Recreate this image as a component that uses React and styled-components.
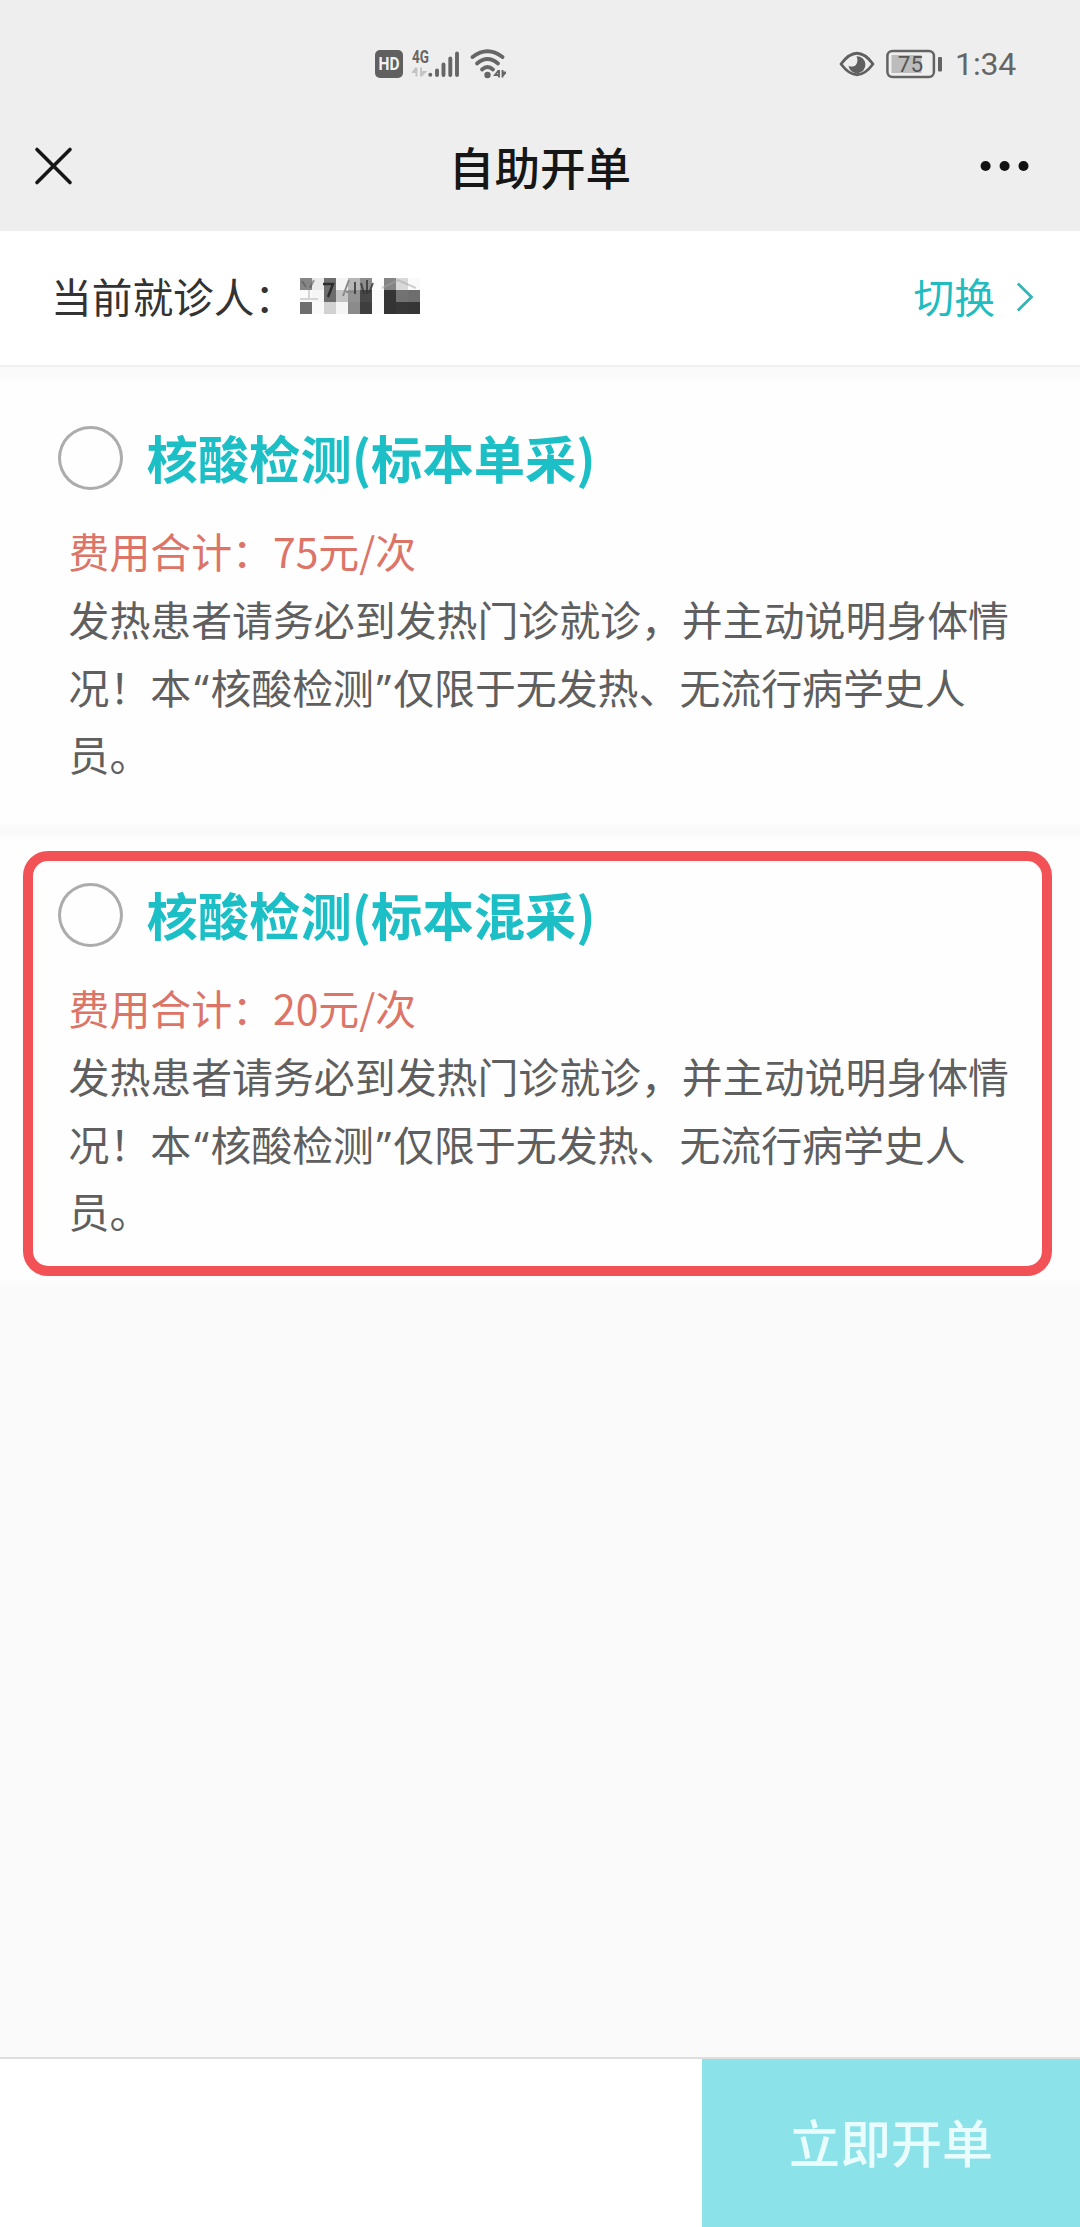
import React from "react";
import styled, { createGlobalStyle } from "styled-components";

const GlobalStyle = createGlobalStyle`
  * { box-sizing: border-box; }
  body {
    margin: 0;
    background: #fafafa;
    font-family: "Noto Sans CJK SC", "Noto Sans", sans-serif;
  }
`;

const Page = styled.div`
  display: flex;
  flex-direction: column;
  width: 1080px;
  height: 2227px;
  background: #fafafa;
  overflow: hidden;
`;

const Header = styled.header`
  height: 231px;
  flex: none;
  background: #eeeeee;
`;

const StatusBar = styled.div`
  display: flex;
  align-items: center;
  justify-content: space-between;
  height: 128px;
  padding: 0 64px 0 374px;
`;

const StatusGroup = styled.div`
  display: flex;
  align-items: center;
  gap: ${(p) => p.$gap}px;
`;

const Clock = styled.span`
  font-family: Roboto, sans-serif;
  font-size: 32px;
  line-height: 40px;
  letter-spacing: -0.2px;
  color: #656565;
`;

const TitleBar = styled.div`
  display: flex;
  align-items: center;
  justify-content: space-between;
  height: 76px;
  padding: 0 50px 0 34px;
`;

const PageTitle = styled.h1`
  margin: 0;
  font-size: 45.6px;
  font-weight: 500;
  line-height: 76px;
  color: #161616;
`;

const IconButton = styled.button`
  display: flex;
  align-items: center;
  justify-content: ${(p) => p.$justify};
  width: ${(p) => p.$width}px;
  height: 60px;
  padding: 0;
  border: 0;
  background: none;
`;

const PatientRow = styled.section`
  display: flex;
  flex: none;
  align-items: center;
  justify-content: space-between;
  height: 136px;
  padding: 0 46px 0 51px;
  border-bottom: 2px solid #efefef;
  background: #fff;
`;

const Patient = styled.div`
  display: flex;
  align-items: center;
  font-size: 40.7px;
  line-height: 60px;
  color: #333;
`;

const RowLabel = styled.span`
  padding-bottom: 4px;
`;

const SwitchLink = styled.a`
  display: flex;
  align-items: center;
  gap: 21px;
  font-size: 40.7px;
  line-height: 60px;
  color: #20bcbf;
`;

const CardList = styled.main`
  display: flex;
  flex: none;
  flex-direction: column;
  gap: 16px;
  padding-top: 15px;
`;

const Card = styled.article`
  position: relative;
  height: 441px;
  padding: 42px 60px 0 58px;
  background: #fefefe;
  box-shadow: 0 0 5px 2px #fefefe;
`;

const Highlight = styled.div`
  position: absolute;
  top: 12px;
  right: 28px;
  bottom: 4px;
  left: 23px;
  border: 10px solid #f25156;
  border-radius: 25px;
`;

const CardHead = styled.div`
  display: flex;
  align-items: center;
  gap: 24px;
  height: 68px;
  margin-bottom: 25px;
`;

const Radio = styled.span`
  width: 64.5px;
  height: 64px;
  border: 3px solid #acacac;
  border-radius: 50%;
`;

const CardTitle = styled.h2`
  margin: 0;
  padding-bottom: 3px;
  font-size: 51.3px;
  font-weight: 700;
  line-height: 68px;
  color: #1dbfc6;
`;

const CardText = styled.p`
  width: 950px;
  margin: 0 0 0 10.5px;
  font-size: 40.9px;
  line-height: 67.8px;
  color: ${(p) => (p.$price ? "#dc7468" : "#5f5f5f")};
`;

const Quote = styled.span`
  padding: ${(p) => (p.$close ? "0 2px 0 2.5px" : "0 1.5px 0 3px")};
  font-family: "Noto Sans", sans-serif;
  line-height: 1;
`;

const Footer = styled.footer`
  display: flex;
  flex: none;
  justify-content: flex-end;
  height: 170px;
  margin-top: auto;
  border-top: 2px solid #dedede;
  background: #fff;
`;

const SubmitButton = styled.button`
  width: 378px;
  padding: 0 0 5px;
  border: 0;
  background: #8be2e9;
  color: #e9fdfe;
  font-family: inherit;
  font-size: 51px;
  font-weight: 500;
  line-height: 162px;
`;

const MosaicSvg = styled.svg`
  margin-left: 5px;
  margin-bottom: 5px;
`;

const MOSAIC = [
  ["#868686", "#eaeaea", "#6e6e6e", "#f4f4f4", "#b6b6b6", "#8d8d8d", "#fdfdfd", "#858585", "#d9d9d9", "#fafafa"],
  ["#fafafa", "#f6f6f6", "#6c6c6c", "#c4c4c4", "#929292", "#484848", "#fafafa", "#343434", "#727272", "#6e6e6e"],
  ["#6e6e6e", "#fafafa", "#d2d2d2", "#f5f5f5", "#8b8b8b", "#3e3e3e", "#fbfbfb", "#343434", "#383838", "#363636"],
];

const MaskedName = () => (
  <MosaicSvg width="120" height="36" viewBox="0 0 120 36">
    {MOSAIC.map((row, y) =>
      row.map((fill, x) => (
        <rect key={`${x}-${y}`} x={x * 12} y={y * 12} width="12" height="12" fill={fill} shapeRendering="crispEdges" />
      ))
    )}
    <g fill="none">
      <path d="M2 3l4 6M14 2l-4 8" stroke="#555" strokeWidth="1.8" opacity=".6" />
      <path d="M9 12v9M0 21h18" stroke="#d4d4d4" strokeWidth="2" />
      <path d="M23 6h10l-5 13" stroke="#2c2c2c" strokeWidth="2.5" />
      <path d="M49 2l-6 16M46 14h8" stroke="#8a8a8a" strokeWidth="2" />
      <path d="M55 4v12M61 5l3 11M67 2v14M73 5l-4 10" stroke="#333" strokeWidth="2" opacity=".8" />
      <path d="M82 10L98 2l18 8" stroke="#a5a5a5" strokeWidth="2" opacity=".5" />
    </g>
  </MosaicSvg>
);

const HdIcon = () => (
  <svg width="30" height="30" viewBox="0 0 30 30">
    <rect x="1" y="1" width="28" height="28" rx="5" fill="#606060" />
    <text x="15" y="21" textAnchor="middle" textLength="21" lengthAdjust="spacingAndGlyphs" fontFamily="Roboto, sans-serif" fontWeight="700" fontSize="17.5" fill="#f2f2f2">HD</text>
  </svg>
);

const SignalIcon = () => (
  <svg width="50" height="32" viewBox="0 0 50 32">
    <text x="0" y="14.5" textLength="17" lengthAdjust="spacingAndGlyphs" fontFamily="Roboto, sans-serif" fontWeight="700" fontSize="17.5" fill="#666">4G</text>
    <path d="M4.5 20v8.5M4.5 19.5l-3.5 4.5h3.5M9 19.5v9M9 28l4-4H9" fill="none" stroke="#c4c4c4" strokeWidth="2" />
    <g stroke="#666" strokeWidth="3.9" strokeLinecap="round">
      <path d="M18.3 26.6v.2M25 22.5v4.5M31.5 16.5v10.5M38.300 10.5v16.5M45 5.5v21.5" />
    </g>
  </svg>
);

const WifiIcon = () => (
  <svg width="36" height="32" viewBox="0 0 36 32">
    <g fill="none" stroke="#666" strokeWidth="3.8" strokeLinecap="round">
      <path d="M2.5 9Q17.5-2.5 32.5 9" />
      <path d="M7 15.5Q17.5 6.500 28 15.5" />
      <path d="M12 21.5Q17.5 16.5 23 21.5" />
    </g>
    <circle cx="17.5" cy="27" r="3.2" fill="#666" />
    <path d="M28.5 22.5l-3.5 4.5h4M29 22v7.500M32.5 22v7.5M32.5 28l3-3.5h-3" fill="none" stroke="#666" strokeWidth="1.9" />
  </svg>
);

const EyeIcon = () => (
  <svg width="36" height="26" viewBox="0 0 36 26">
    <path d="M2 13Q18-8.5 34 13Q18 34.5 2 13Z" fill="none" stroke="#606060" strokeWidth="2.8" strokeLinejoin="round" />
    <path d="M17.5 5.2a8.5 8.5 0 1 1-8 9.5c2.5 1.3 5.5 1.2 7.3-.8 2-2.200 2.200-5.500.7-8.700z" fill="#606060" />
  </svg>
);

const BatteryIcon = () => (
  <svg width="58" height="32" viewBox="0 0 58 32">
    <rect x="1.4" y="3" width="46.5" height="26" rx="5" fill="none" stroke="#646464" strokeWidth="2.5" />
    <rect x="5.5" y="7" width="30" height="18" fill="#bcbcbc" />
    <text x="24.5" y="24" textAnchor="middle" fontFamily="Roboto, sans-serif" fontSize="22.5" fill="#555">75</text>
    <rect x="52" y="9" width="4" height="14.5" rx="1" fill="#646464" />
  </svg>
);

const CloseIcon = () => (
  <svg width="40" height="40" viewBox="0 0 40 40">
    <path d="M3 3.5l33 33M36 3.5l-33 33" stroke="#161616" strokeWidth="3.6" strokeLinecap="round" />
  </svg>
);

const MoreIcon = () => (
  <svg width="50" height="12" viewBox="0 0 50 12" fill="#111">
    <circle cx="5.6" cy="6" r="5" />
    <circle cx="24.6" cy="6" r="5" />
    <circle cx="43.5" cy="6" r="5" />
  </svg>
);

const ChevronSvg = styled.svg`
  margin-bottom: 2px;
`;

const ChevronIcon = () => (
  <ChevronSvg width="18" height="32" viewBox="0 0 18 32">
    <path d="M1.8 2.5L15.5 16 1.8 29.5" fill="none" stroke="#35b5b6" strokeWidth="2.8" />
  </ChevronSvg>
);

const tests = [
  { title: "核酸检测(标本单采)", price: "75", highlighted: false },
  { title: "核酸检测(标本混采)", price: "20", highlighted: true },
];

function TestCard({ title, price, highlighted }) {
  return (
    <Card>
      <CardHead>
        <Radio />
        <CardTitle>{title}</CardTitle>
      </CardHead>
      <CardText $price>{`费用合计：${price}元/次`}</CardText>
      <CardText>
        发热患者请务必到发热门诊就诊，并主动说明身体情况！本<Quote>“</Quote>核酸检测<Quote $close>”</Quote>仅限于无发热、无流行病学史人员。
      </CardText>
      {highlighted && <Highlight />}
    </Card>
  );
}

export default function App() {
  return (
    <Page>
      <GlobalStyle />
      <Header>
        <StatusBar>
          <StatusGroup $gap={8}>
            <HdIcon />
            <SignalIcon />
            <WifiIcon />
          </StatusGroup>
          <StatusGroup $gap={11}>
            <EyeIcon />
            <BatteryIcon />
            <Clock>1:34</Clock>
          </StatusGroup>
        </StatusBar>
        <TitleBar>
          <IconButton $justify="flex-start" $width={76} aria-label="关闭"><CloseIcon /></IconButton>
          <PageTitle>自助开单</PageTitle>
          <IconButton $justify="flex-end" $width={60} aria-label="更多"><MoreIcon /></IconButton>
        </TitleBar>
      </Header>
      <PatientRow>
        <Patient>
          <RowLabel>当前就诊人：</RowLabel>
          <MaskedName />
        </Patient>
        <SwitchLink>
          <RowLabel>切换</RowLabel>
          <ChevronIcon />
        </SwitchLink>
      </PatientRow>
      <CardList>
        {tests.map((t) => (
          <TestCard key={t.title} {...t} />
        ))}
      </CardList>
      <Footer>
        <SubmitButton>立即开单</SubmitButton>
      </Footer>
    </Page>
  );
}
